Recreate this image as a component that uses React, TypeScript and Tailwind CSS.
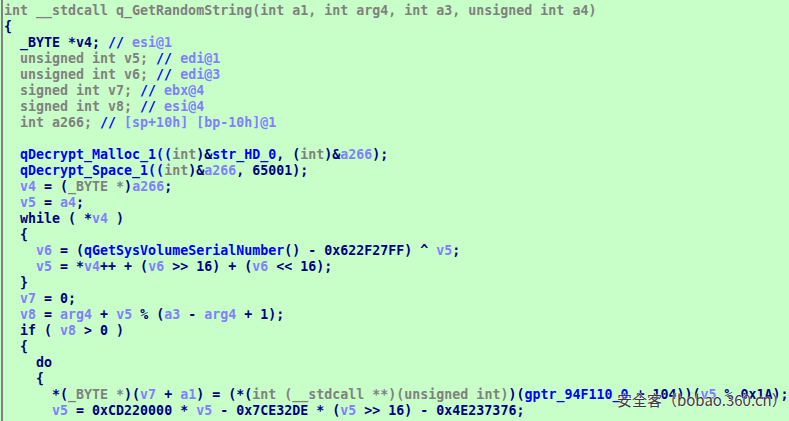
import React from "react";

type Seg = [string, string];

const G = "text-[#808080]";
const N = "text-[#000080]";
const B = "text-[#0000ff]";
const P = "text-[#8080ff]";

const lines: Seg[][] = [
  [["int __stdcall q_GetRandomString(int a1, int arg4, int a3, unsigned int a4)", G]],
  [["{", N]],
  [["  _BYTE *v4; ", N], ["//", B], [" esi@1", P]],
  [["  unsigned int v5; ", G], ["//", B], [" edi@1", P]],
  [["  unsigned int v6; ", G], ["//", B], [" edi@3", P]],
  [["  signed int v7; ", G], ["//", B], [" ebx@4", P]],
  [["  signed int v8; ", G], ["//", B], [" esi@4", P]],
  [["  int a266; ", G], ["//", B], [" [sp+10h] [bp-10h]@1", P]],
  [[" ", N]],
  [["  ", N], ["qDecrypt_Malloc_1((", B], ["int", G], [")&", N], ["str_HD_0", B], [", (", N], ["int", G], [")&", N], ["a266", P], [");", N]],
  [["  ", N], ["qDecrypt_Space_1((", B], ["int", G], [")&", N], ["a266", P], [", 65001);", N]],
  [["  ", N], ["v4", P], [" = (", N], ["_BYTE *", G], [")", N], ["a266", P], [";", N]],
  [["  ", N], ["v5", P], [" = ", N], ["a4", P], [";", N]],
  [["  while ( *", N], ["v4", P], [" )", N]],
  [["  {", N]],
  [["    ", N], ["v6", P], [" = (", N], ["qGetSysVolumeSerialNumber", B], ["() - 0x622F27FF) ^ ", N], ["v5", P], [";", N]],
  [["    ", N], ["v5", P], [" = *", N], ["v4", P], ["++ + (", N], ["v6", P], [" >> 16) + (", N], ["v6", P], [" << 16);", N]],
  [["  }", N]],
  [["  ", N], ["v7", P], [" = 0;", N]],
  [["  ", N], ["v8", P], [" = ", N], ["arg4", P], [" + ", N], ["v5", P], [" % (", N], ["a3", P], [" - ", N], ["arg4", P], [" + 1);", N]],
  [["  if ( ", N], ["v8", P], [" > 0 )", N]],
  [["  {", N]],
  [["    do", N]],
  [["    {", N]],
  [
    ["      *(", N],
    ["_BYTE *", G],
    [")(", N],
    ["v7", P],
    [" + ", N],
    ["a1", P],
    [") = (*(", N],
    ["int (__stdcall **)(unsigned int)", G],
    [")(", N],
    ["gptr_94F110_0", B],
    [" + 104))(", N],
    ["v5", P],
    [" % 0x1A);", N],
  ],
  [
    ["      ", N],
    ["v5", P],
    [" = 0xCD220000 * ", N],
    ["v5", P],
    [" - 0x7CE32DE * (", N],
    ["v5", P],
    [" >> 16) - 0x4E237376;", N],
  ],
];

export default function App() {
  return (
    <div className="relative w-[789px] h-[421px] overflow-hidden bg-[#c8ffc8] pl-px">
      <div className="h-full border-l-2 border-[#808080] pl-px pt-[3px]">
        <div className="font-['DejaVu_Sans_Mono',monospace] font-bold text-[13.3px] leading-[16px] whitespace-pre">
          {lines.map((segs, i) => (
            <div key={i} className="h-[16px]">
              {segs.map((s, j) => (
                <span key={j} className={s[1]}>
                  {s[0]}
                </span>
              ))}
            </div>
          ))}
        </div>
      </div>
      <div className="absolute left-[617px] top-[390px] font-['Noto_Sans_CJK_SC',sans-serif] text-[15px] leading-[20px] text-[#3a3a3a] whitespace-nowrap [text-shadow:0_0_2px_#ffffff,0_0_1px_#ffffff]">
        安全客（bobao.360.cn）
      </div>
    </div>
  );
}
